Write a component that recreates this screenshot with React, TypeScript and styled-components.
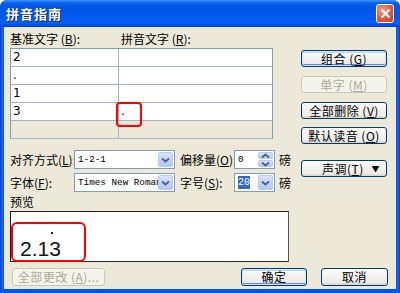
import styled, { createGlobalStyle, css } from 'styled-components';

const GlobalStyle = createGlobalStyle`
  html, body {
    margin: 0;
    padding: 0;
    background: #ffffff;
  }
  * {
    box-sizing: border-box;
  }
`;

const FONT = `"Noto Sans CJK SC", "DejaVu Sans", sans-serif`;

const ScWindow = styled.div`
  width: 400px;
  height: 293px;
  display: flex;
  flex-direction: column;
  background: linear-gradient(90deg, #0831d9 0, #166aee 2px, #0855dd 4px, #0855dd 396px, #166aee 398px, #0831d9 400px);
  border-radius: 7px 7px 0 0;
  overflow: hidden;
  font-family: ${FONT};
  font-size: 12px;
  color: #000;
`;

const ScTitleBar = styled.div`
  height: 27px;
  flex: none;
  display: flex;
  align-items: center;
  padding-left: 6px;
  background: linear-gradient(
    180deg,
    #3d95ff 0,
    #0a5fec 3px,
    #0054e3 8px,
    #0058ee 16px,
    #0062f8 23px,
    #0046d8 26px,
    #003dd7 27px
  );
`;

const ScTitle = styled.span`
  color: #fff;
  font-weight: bold;
  font-size: 13px;
  letter-spacing: 1px;
  text-shadow: 1px 1px 0 #0a1e6e;
`;

const ScClose = styled.div`
  margin-left: auto;
  margin-right: 6px;
  width: 18px;
  height: 19px;
  border: 1px solid #fff;
  border-radius: 3px;
  background: radial-gradient(circle at 35% 30%, #f0a08a 0, #e2563b 55%, #c5381f 100%);
  display: flex;
  align-items: center;
  justify-content: center;
`;

const ScBody = styled.div`
  flex: 1;
  margin: 0 4px 4px;
  background: #ece9d8;
  padding: 5px 0 0 6px;
  display: flex;
  flex-direction: column;
`;

const ScTop = styled.div`
  display: flex;
`;

const ScLeft = styled.div`
  width: 279px;
  display: flex;
  flex-direction: column;
`;

const ScRight = styled.div`
  width: 86px;
  margin-left: 12px;
  padding-top: 18px;
  display: flex;
  flex-direction: column;
`;

const ScHeader = styled.div`
  display: grid;
  grid-template-columns: 111px 150px;
  height: 16px;
  line-height: 14px;
  white-space: nowrap;
`;

const ScHeaderLabel = styled.span`
  padding-left: 0;
`;

const ScGrid = styled.div`
  width: 263px;
  border: 1px solid #7f9db9;
  border-bottom-color: #a7b3c8;
  display: grid;
  grid-template-columns: 108px 153px;
  background: #fff;
`;

const ScCell = styled.div<{ $filler?: boolean; $last?: boolean }>`
  position: relative;
  height: 18px;
  line-height: 17px;
  padding-left: 2px;
  font-family: "DejaVu Sans", sans-serif;
  font-size: 12px;
  border-bottom: 1px solid #a7b3c8;
  ${(p) =>
    !p.$last &&
    css`
      border-right: 1px solid #a7b3c8;
    `}
  ${(p) =>
    p.$filler &&
    css`
      background: #ece9d8;
      border-bottom: none;
      height: 17px;
    `}
`;

const ScMark = styled.div`
  position: absolute;
  z-index: 2;
  left: -3px;
  top: -1px;
  width: 26px;
  height: 25px;
  border: 2px solid #ff0000;
  border-radius: 4px;
  pointer-events: none;
`;

const ScOptions = styled.div`
  margin-top: 11px;
  display: flex;
  flex-direction: column;
  gap: 4px;
`;

const ScOptionRow = styled.div`
  display: flex;
  align-items: center;
  height: 19px;
  white-space: nowrap;
`;

const ScLabel = styled.span<{ $width: number; $gap?: number }>`
  width: ${(p) => p.$width}px;
  margin-left: ${(p) => p.$gap ?? 0}px;
  flex: none;
  line-height: 19px;
`;

const ScCombo = styled.div<{ $width: number }>`
  width: ${(p) => p.$width}px;
  height: 19px;
  flex: none;
  border: 1px solid #7f9db9;
  background: #fff;
  display: flex;
  align-items: stretch;
  padding: 1px;
`;

const ScComboText = styled.div`
  flex: 1;
  overflow: hidden;
  white-space: nowrap;
  padding-left: 2px;
  font-family: "Liberation Mono", "DejaVu Sans Mono", monospace;
  font-size: 9.3px;
  line-height: 15px;
`;

const ScSelected = styled.span`
  background: #316ac5;
  color: #fff;
  padding: 1px 0;
  font-size: 10px;
`;

const ScArrowBtn = styled.div<{ $half?: boolean }>`
  width: 15px;
  flex: none;
  border: 1px solid #b9c9ef;
  border-radius: 2px;
  background: linear-gradient(180deg, #dce6fc 0, #c1d3fb 50%, #b4c8f7 100%);
  display: flex;
  align-items: center;
  justify-content: center;
  ${(p) =>
    p.$half &&
    css`
      height: 7px;
    `}
`;

const ScSpinStack = styled.div`
  width: 15px;
  display: flex;
  flex-direction: column;
  justify-content: space-between;
`;

const ScUnit = styled.span`
  margin-left: 4px;
`;

const ScPreviewLabel = styled.div`
  margin-top: 3px;
  line-height: 14px;
  height: 16px;
`;

const ScPreview = styled.div`
  width: 279px;
  height: 51px;
  background: #fff;
  border: 1px solid #1c1c1c;
  border-right-color: #555;
  border-bottom-color: #2a2a2a;
  padding: 10px 0 0 0;
`;

const ScPreviewMark = styled.div`
  width: 75px;
  height: 40px;
  border: 2px solid #ff0000;
  border-radius: 6px;
  position: relative;
`;

const ScRuby = styled.div`
  position: absolute;
  left: 38px;
  top: 8px;
  width: 2px;
  height: 2px;
  background: #222;
`;

const ScPreviewText = styled.div`
  position: absolute;
  left: 7px;
  top: 14px;
  font-family: "Liberation Sans", Arial, sans-serif;
  font-size: 21px;
  line-height: 22px;
  color: #111;
`;

const ScFooter = styled.div`
  margin-top: 6px;
  display: flex;
  align-items: center;
`;

const ScButton = styled.div<{
  $width: number;
  $disabled?: boolean;
  $default?: boolean;
  $gap?: number;
}>`
  width: ${(p) => p.$width}px;
  height: 18px;
  flex: none;
  margin-left: ${(p) => p.$gap ?? 0}px;
  border: 1px solid #003c74;
  border-radius: 3px;
  background: linear-gradient(180deg, #ffffff 0, #f4f3ee 40%, #ecebe6 85%, #d6d0c5 100%);
  display: flex;
  align-items: center;
  justify-content: center;
  white-space: nowrap;
  line-height: 16px;
  letter-spacing: 0.5px;
  ${(p) =>
    p.$default &&
    css`
      box-shadow: inset 0 0 0 1px #cee7ff, inset 0 -1px 0 1px #6982ee, inset 0 1px 0 1px #bcd4f6;
    `}
  ${(p) =>
    p.$disabled &&
    css`
      border-color: #c9c7ba;
      background: #f5f4ea;
      color: #aca899;
    `}
`;

const ScStackBtn = styled(ScButton)<{ $top: number }>`
  margin-top: ${(p) => p.$top}px;
  height: 17px;
`;

const ScSplitBtn = styled(ScStackBtn)`
  justify-content: flex-start;
  padding-left: 20px;
`;

const ScCaret = styled.span`
  margin-left: auto;
  margin-right: 6px;
  font-size: 8px;
`;

const Key = ({ k }: { k: string }) => (
  <>
    (<u>{k}</u>)
  </>
);

const Chevron = ({ dir = 'down' }: { dir?: 'up' | 'down' }) => (
  <svg width="9" height="6" viewBox="0 0 9 6">
    <path
      d={dir === 'down' ? 'M1 1.5 L4.5 4.5 L8 1.5' : 'M1 4.5 L4.5 1.5 L8 4.5'}
      fill="none"
      stroke="#4d6185"
      strokeWidth="1.8"
    />
  </svg>
);

const rows = [
  ['2', ''],
  ['.', ''],
  ['1', ''],
  ['3', '.'],
];

export default function App() {
  return (
    <>
      <GlobalStyle />
      <ScWindow>
        <ScTitleBar>
          <ScTitle>拼音指南</ScTitle>
          <ScClose>
            <svg width="11" height="11" viewBox="0 0 11 11">
              <path d="M1.5 1.5 L9.5 9.5 M9.5 1.5 L1.5 9.5" stroke="#fff" strokeWidth="2" />
            </svg>
          </ScClose>
        </ScTitleBar>
        <ScBody>
          <ScTop>
            <ScLeft>
              <ScHeader>
                <ScHeaderLabel>
                  基准文字 <Key k="B" />:
                </ScHeaderLabel>
                <ScHeaderLabel>
                  拼音文字 <Key k="R" />:
                </ScHeaderLabel>
              </ScHeader>
              <ScGrid>
                {rows.flatMap(([base, ruby], i) => [
                  <ScCell key={`b${i}`}>{base}</ScCell>,
                  <ScCell key={`r${i}`} $last>
                    {ruby}
                    {i === 3 && <ScMark />}
                  </ScCell>,
                ])}
                <ScCell $filler />
                <ScCell $filler $last />
              </ScGrid>
              <ScOptions>
                <ScOptionRow>
                  <ScLabel $width={64}>
                    对齐方式<Key k="L" />:
                  </ScLabel>
                  <ScCombo $width={101}>
                    <ScComboText>1-2-1</ScComboText>
                    <ScArrowBtn>
                      <Chevron />
                    </ScArrowBtn>
                  </ScCombo>
                  <ScLabel $width={54} $gap={5}>
                    偏移量<Key k="O" />:
                  </ScLabel>
                  <ScCombo $width={41}>
                    <ScComboText>0</ScComboText>
                    <ScSpinStack>
                      <ScArrowBtn $half>
                        <Chevron dir="up" />
                      </ScArrowBtn>
                      <ScArrowBtn $half>
                        <Chevron />
                      </ScArrowBtn>
                    </ScSpinStack>
                  </ScCombo>
                  <ScUnit>磅</ScUnit>
                </ScOptionRow>
                <ScOptionRow>
                  <ScLabel $width={64}>
                    字体<Key k="F" />:
                  </ScLabel>
                  <ScCombo $width={101}>
                    <ScComboText>Times New Roman</ScComboText>
                    <ScArrowBtn>
                      <Chevron />
                    </ScArrowBtn>
                  </ScCombo>
                  <ScLabel $width={54} $gap={5}>
                    字号<Key k="S" />:
                  </ScLabel>
                  <ScCombo $width={41}>
                    <ScComboText>
                      <ScSelected>20</ScSelected>
                    </ScComboText>
                    <ScArrowBtn>
                      <Chevron />
                    </ScArrowBtn>
                  </ScCombo>
                  <ScUnit>磅</ScUnit>
                </ScOptionRow>
              </ScOptions>
              <ScPreviewLabel>预览</ScPreviewLabel>
              <ScPreview>
                <ScPreviewMark>
                  <ScRuby />
                  <ScPreviewText>2.13</ScPreviewText>
                </ScPreviewMark>
              </ScPreview>
            </ScLeft>
            <ScRight>
              <ScStackBtn $width={86} $top={0} $default>
                组合 <Key k="G" />
              </ScStackBtn>
              <ScStackBtn $width={86} $top={9} $disabled>
                单字 <Key k="M" />
              </ScStackBtn>
              <ScStackBtn $width={86} $top={9}>
                全部删除 <Key k="V" />
              </ScStackBtn>
              <ScStackBtn $width={86} $top={8}>
                默认读音 <Key k="O" />
              </ScStackBtn>
              <ScSplitBtn $width={86} $top={16}>
                声调<Key k="T" />
                <ScCaret>▼</ScCaret>
              </ScSplitBtn>
            </ScRight>
          </ScTop>
          <ScFooter>
            <ScButton $width={93} $gap={2} $disabled>
              全部更改 (<u>A</u>)...
            </ScButton>
            <ScButton $width={66} $gap={136} $default>
              确定
            </ScButton>
            <ScButton $width={67} $gap={14}>
              取消
            </ScButton>
          </ScFooter>
        </ScBody>
      </ScWindow>
    </>
  );
}
